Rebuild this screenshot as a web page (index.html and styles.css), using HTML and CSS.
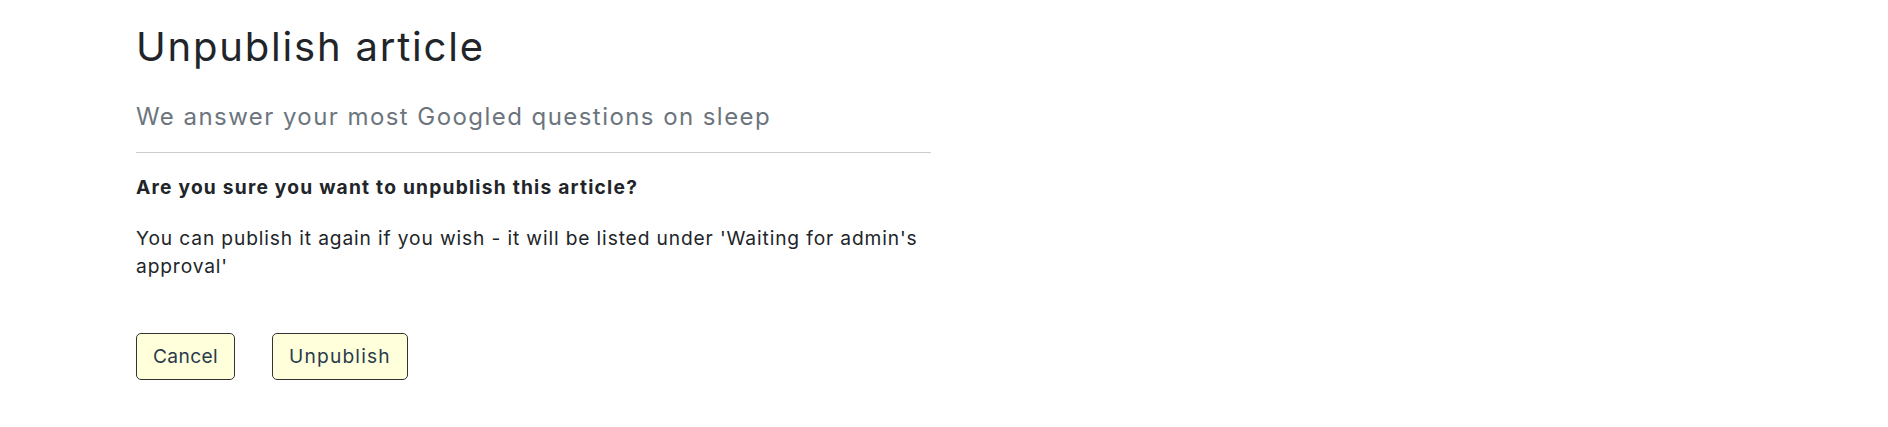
FILE: index.html
```html
<!DOCTYPE html>
<html lang="en">
<head>
<meta charset="utf-8">
<title>Unpublish article</title>
<link rel="stylesheet" href="styles.css">
</head>
<body>
<main class="page">
  <h1 class="title">Unpublish article</h1>
  <h2 class="subtitle">We answer your most Googled questions on sleep</h2>
  <hr class="divider">
  <p class="question">Are you sure you want to unpublish this article?</p>
  <p class="note">You can publish it again if you wish - it will be listed under 'Waiting for admin's approval'</p>
  <div class="actions">
    <button class="btn btn-cancel" type="button">Cancel</button>
    <button class="btn btn-unpublish" type="button">Unpublish</button>
  </div>
</main>
</body>
</html>
```
FILE: styles.css
```css
html, body {
  margin: 0;
  padding: 0;
  background: #fff;
}
body {
  font-family: Inter, "Open Sans", sans-serif;
  color: #212529;
  font-size: 19.2px;
  line-height: 1.5;
  letter-spacing: 0.045em;
}
.page {
  width: 795px;
  padding: 23px 0 0 136px;
}
.title {
  margin: 0 0 32px;
  font-size: 40px;
  font-weight: 400;
  line-height: 1.2;
  letter-spacing: 0.045em;
  color: #212529;
}
.subtitle {
  margin: 0;
  font-size: 24px;
  font-weight: 400;
  line-height: 1.2;
  letter-spacing: 0.06em;
  color: #6c757d;
}
.divider {
  margin: 20px 0 20px;
  border: 0;
  border-top: 1px solid #cccccc;
  height: 0;
}
.question {
  margin: 0 0 22px;
  font-weight: 700;
  letter-spacing: 0.063em;
}
.note {
  margin: 0;
}
.actions {
  display: flex;
  gap: 37px;
  margin-top: 52px;
}
.btn {
  font-family: inherit;
  font-size: 19.2px;
  line-height: 1.5;
  letter-spacing: 0.04em;
  padding: 8px 16px;
  background: #ffffdc;
  color: #2a3b4c;
  border: 1px solid #333;
  border-radius: 5px;
}
.btn-cancel {
  letter-spacing: 0.018em;
}
.btn-unpublish {
  letter-spacing: 0.061em;
}
```
